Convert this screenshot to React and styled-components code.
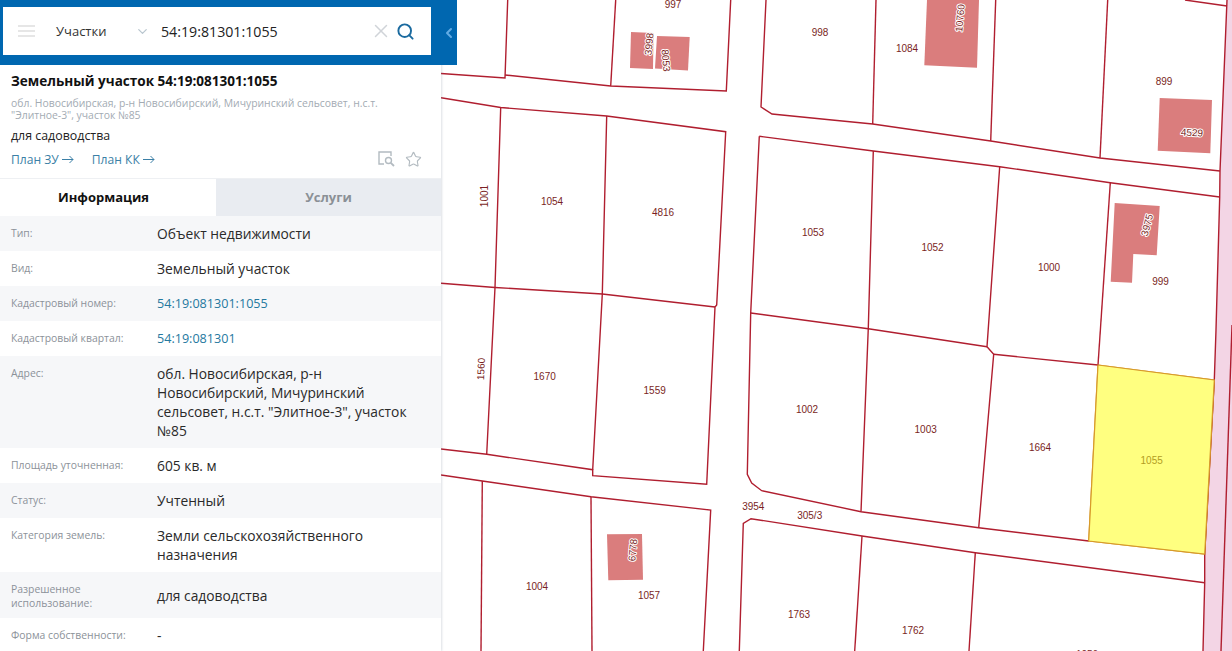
import styled, { createGlobalStyle } from "styled-components";
import { X, Search, ChevronDown, ChevronLeft, Star } from "lucide-react";

const Global = createGlobalStyle`
  html, body {
    margin: 0;
    height: 100%;
    overflow: hidden;
    background: #fff;
    font-family: "Open Sans", "Liberation Sans", sans-serif;
  }
`

const Page = styled.div`
  display: flex;
  width: 1232px;
  height: 651px;
  overflow: hidden;
`

const Sidebar = styled.aside`
  position: relative;
  z-index: 2;
  flex: 0 0 441px;
  display: flex;
  flex-direction: column;
  background: #fff;
  box-shadow: 1px 0 2px rgba(120, 130, 150, 0.25);
`

const Header = styled.header`
  position: relative;
  flex: 0 0 65px;
  box-sizing: border-box;
  padding: 7px 10px 10px 3px;
  background: #0067b0;
`

const Toggle = styled.button`
  position: absolute;
  top: 0;
  left: 100%;
  width: 16px;
  height: 65px;
  padding: 0;
  border: 0;
  display: flex;
  align-items: center;
  justify-content: center;
  background: #0067b0;
  color: #62ace4;
`

const SearchBox = styled.div`
  height: 48px;
  display: flex;
  align-items: center;
  background: #fff;
`

const Burger = styled.div`
  width: 17px;
  height: 12px;
  margin-left: 15px;
  border-top: 2px solid #e6e6e6;
  border-bottom: 2px solid #e6e6e6;
  box-sizing: border-box;
  position: relative;
  &::after {
    content: "";
    position: absolute;
    left: 0;
    right: 0;
    top: 3px;
    height: 2px;
    background: #e6e6e6;
  }
`

const Scope = styled.span`
  margin-left: 21px;
  width: 80px;
  font-size: 13px;
  color: #333;
`

const Chevron = styled(ChevronDown)`
  color: #b9c6cf;
  margin-left: -1px;
`

const Query = styled.span`
  margin-left: 11px;
  flex: 1;
  font-size: 14.2px;
  color: #222;
`

const Clear = styled(X)`
  color: #d0d4d8;
  margin-right: 4px;
`

const SearchIcon = styled(Search)`
  color: #1a6a9f;
  margin-right: 16px;
`

const Summary = styled.section`
  flex: 0 0 113px;
  box-sizing: border-box;
  padding: 7px 11px 0;
  position: relative;
`

const Title = styled.h1`
  margin: 0;
  font-size: 13.55px;
  line-height: 18px;
  font-weight: 700;
  color: #111;
`

const Address = styled.p`
  margin: 7px 0 0;
  font-size: 10.4px;
  line-height: 12px;
  color: #a3abb3;
`

const Purpose = styled.p`
  margin: 6px 0 0;
  font-size: 12.4px;
  line-height: 18px;
  color: #222;
`

const Actions = styled.div`
  display: flex;
  align-items: center;
  margin-top: 5px;
  height: 18px;
`

const PlanLink = styled.a`
  display: flex;
  align-items: center;
  gap: 3px;
  margin-right: 18px;
  font-size: 12.1px;
  color: #3b7fa6;
`

const ActionIcons = styled.div`
  margin-left: auto;
  margin-right: 8px;
  display: flex;
  align-items: center;
  gap: 9px;
  color: #b3bbc1;
`

const Tabs = styled.div`
  flex: 0 0 38px;
  display: grid;
  grid-template-columns: 216px 1fr;
  border-top: 1px solid #eef0f3;
  box-sizing: border-box;
`

const Tab = styled.div`
  display: flex;
  align-items: center;
  justify-content: center;
  padding: 0 ${p => (p.$active ? "9px" : "0")} 2px 0;
  font-size: 13px;
  font-weight: 700;
  color: ${p => (p.$active ? "#111" : "#8b9096")};
  background: ${p => (p.$active ? "#fff" : "#e9ecf1")};
`

const Rows = styled.div`
  flex: 1;
  overflow: hidden;
`

const Row = styled.div`
  display: grid;
  grid-template-columns: 157px 1fr;
  background: ${p => (p.$shaded ? "#f6f7f9" : "#fff")};
`

const Label = styled.div`
  padding: 10px 20px 8px 11px;
  font-size: 10.4px;
  line-height: 14px;
  color: #8c9299;
`

const Value = styled.div`
  padding: 8px 20px 8px 0;
  font-size: ${p => (p.$link ? "12.6px" : "13.8px")};
  line-height: 19px;
  color: ${p => (p.$link ? "#25799f" : "#2a2a2a")};
  align-self: ${p => (p.$center ? "center" : "start")};
`

const MapArea = styled.main`
  flex: 1;
  background: #fff;
`

const MapSvg = styled.svg`
  display: block;
  width: 791px;
  height: 651px;
`

const Boundary = styled.polyline`
  fill: none;
  stroke: #b01e2f;
  stroke-width: 1.4;
  stroke-linejoin: miter;
`

const Building = styled.polygon`
  fill: #da7d7d;
`

const Selected = styled.polygon`
  fill: #ffff80;
  stroke: #d79a2b;
  stroke-width: 1.2;
`

const Strip = styled.polygon`
  fill: #f3d5e5;
`

const Tag = styled.text`
  font-family: "Liberation Sans", Arial, sans-serif;
  font-size: 10px;
  text-anchor: middle;
  dominant-baseline: central;
  fill: ${p => p.$color || "#7a1f24"};
  ${p => p.$halo && "paint-order: stroke; stroke: #fff; stroke-width: 2px; stroke-linejoin: round;"}
`

const rows = [
  { label: "Тип:", value: "Объект недвижимости" },
  { label: "Вид:", value: "Земельный участок" },
  { label: "Кадастровый номер:", value: "54:19:081301:1055", link: true },
  { label: "Кадастровый квартал:", value: "54:19:081301", link: true },
  { label: "Адрес:", value: 'обл. Новосибирская, р-н Новосибирский, Мичуринский сельсовет, н.с.т. "Элитное-3", участок №85' },
  { label: "Площадь уточненная:", value: "605 кв. м" },
  { label: "Статус:", value: "Учтенный" },
  { label: "Категория земель:", value: "Земли сельскохозяйственного назначения" },
  { label: "Разрешенное использование:", value: "для садоводства", center: true },
  { label: "Форма собственности:", value: "-" },
]

const lines = [
  "441,73.5 505,78 507.7,0",
  "505,75 610.7,86 726.3,91 730.7,0",
  "610.7,86 615.7,0",
  "766,0 761,107 772,114 832,120 872.7,124 990.7,141 1100,158 1220,171",
  "872.7,124 876,0",
  "990.7,141 995.7,0",
  "1100,158 1107.7,0",
  "1185,0 1227,6",
  "1227,0 1220,171 1219.7,197 1216,330 1214.3,380 1204.7,554 1204.7,582.7 1203,651",
  "1232,325 1221,651",
  "441,97.7 500.7,107.5 606.7,116 725.7,131.7 716.7,305 715,307 706.7,484.3 592.7,475.7 592.7,469.7 486.7,454.3 441,449",
  "500.7,107.5 495,287.5 486.7,454.3",
  "606.7,116 602.3,294 592.7,469.7",
  "441,283.3 495,287.5 602.3,294 715,307",
  "441,475 482.3,481 591,496.7 710.7,510 703.3,651",
  "482.3,481 481,651",
  "591,496.7 592,651",
  "759.3,136.3 873.3,151 999.7,166.7 1110.3,182.7 1219.7,197",
  "759.3,136.3 750.7,313 747.3,474.3 751.7,483 761.7,490.7 861,511.7 978.7,527.7 1088.7,541",
  "873.3,151 868.3,328 861,511.7",
  "999.7,166.7 987,346.7 993.7,354.3 978.7,527.7",
  "1110.3,182.7 1098,365",
  "750.7,313 868.3,328.7 987,346.7",
  "993.7,354.3 1098,365",
  "739.3,651 743.3,523.3 751,518.7 862,536 975.3,552.7 1204.7,582.7",
  "862,536 854.7,651",
  "975.3,552.7 969,651",
]

const buildings = [
  "631,32 653.5,33 653,69 630,68",
  "657,36 689.7,37 688,70.5 655,68.5",
  "927,0 979,0 977,67.7 924.3,65.3",
  "1159.7,98 1212,100 1210.3,153.3 1157.7,150.7",
  "1114.7,203 1159.7,206 1156.7,255.3 1133.3,254 1132,282.7 1110.7,281.7",
  "607,534.3 642,534 643,579.7 608.3,580.3",
]

const tags = [
  { t: "997", x: 673, y: 4 },
  { t: "3998", x: 649, y: 44, r: -85, halo: true },
  { t: "8053", x: 666, y: 60.5, r: 85, halo: true },
  { t: "998", x: 820, y: 32 },
  { t: "1001", x: 484, y: 196, r: -90 },
  { t: "1054", x: 552, y: 201 },
  { t: "4816", x: 663, y: 212 },
  { t: "1053", x: 813, y: 232 },
  { t: "10760", x: 960, y: 18, r: -85, halo: true },
  { t: "1084", x: 907, y: 48, halo: true },
  { t: "899", x: 1164, y: 81 },
  { t: "4529", x: 1192, y: 132.5, r: 3, halo: true },
  { t: "1052", x: 932.5, y: 247 },
  { t: "1000", x: 1049, y: 267 },
  { t: "3975", x: 1147, y: 225, r: -75, halo: true },
  { t: "999", x: 1160.5, y: 281 },
  { t: "1560", x: 481, y: 369, r: -88 },
  { t: "1670", x: 544.7, y: 376 },
  { t: "1559", x: 654.7, y: 390 },
  { t: "1002", x: 807, y: 409 },
  { t: "1003", x: 925.7, y: 429 },
  { t: "1664", x: 1040, y: 447 },
  { t: "1055", x: 1151.7, y: 460, color: "#b39d23" },
  { t: "3954", x: 753.3, y: 506.5 },
  { t: "305/3", x: 809.7, y: 515 },
  { t: "1004", x: 537, y: 586 },
  { t: "6778", x: 632.7, y: 550, r: -85, halo: true },
  { t: "1057", x: 649, y: 595 },
  { t: "1763", x: 799, y: 614 },
  { t: "1762", x: 913, y: 630 },
  { t: "1056", x: 1087, y: 654 },
]

function ThinArrow() {
  return (
    <svg width="12" height="9" viewBox="0 0 12 9" fill="none" stroke="currentColor" strokeWidth="1">
      <path d="M0 4.5h11M7.5 1l3.5 3.5L7.5 8" />
    </svg>
  )
}

function PlanSearchIcon() {
  return (
    <svg width="18" height="16" viewBox="0 0 18 16" fill="none" stroke="currentColor" strokeWidth="1.4">
      <path d="M6 13H1V1h12v4" />
      <circle cx="10.5" cy="9.5" r="3" />
      <path d="M12.8 11.8 16 15" strokeWidth="1.8" />
    </svg>
  )
}

export default function App() {
  return (
    <Page>
      <Global />
      <Sidebar>
        <Header>
          <SearchBox>
            <Burger />
            <Scope>Участки</Scope>
            <Chevron size={15} strokeWidth={2} />
            <Query>54:19:81301:1055</Query>
            <Clear size={22} strokeWidth={1.6} />
            <SearchIcon size={19} strokeWidth={2.4} />
          </SearchBox>
          <Toggle aria-label="Свернуть">
            <ChevronLeft size={20} strokeWidth={3} />
          </Toggle>
        </Header>
        <Summary>
          <Title>Земельный участок 54:19:081301:1055</Title>
          <Address>
            обл. Новосибирская, р-н Новосибирский, Мичуринский сельсовет, н.с.т.
            <br />
            "Элитное-3", участок №85
          </Address>
          <Purpose>для садоводства</Purpose>
          <Actions>
            <PlanLink>План ЗУ <ThinArrow /></PlanLink>
            <PlanLink>План КК <ThinArrow /></PlanLink>
            <ActionIcons>
              <PlanSearchIcon />
              <Star size={17} strokeWidth={1.6} />
            </ActionIcons>
          </Actions>
        </Summary>
        <Tabs>
          <Tab $active>Информация</Tab>
          <Tab>Услуги</Tab>
        </Tabs>
        <Rows>
          {rows.map((r, i) => (
            <Row key={r.label} $shaded={i % 2 === 0}>
              <Label>{r.label}</Label>
              <Value $link={r.link} $center={r.center}>{r.value}</Value>
            </Row>
          ))}
        </Rows>
      </Sidebar>
      <MapArea>
        <MapSvg viewBox="441 0 791 651">
          <Strip points="1227,0 1232,0 1232,651 1203,651 1204.7,554 1214.3,380 1216,330 1219.7,197 1220,171" />
          {buildings.map(b => <Building key={b} points={b} />)}
          <Selected points="1098,365 1214.3,380 1204.7,554 1088.7,541" />
          {lines.map(l => <Boundary key={l} points={l} />)}
          <Selected points="1098,365 1214.3,380 1204.7,554 1088.7,541" />
          {tags.map(l => (
            <Tag
              key={l.t}
              x={l.x}
              y={l.y}
              $color={l.color}
              $halo={l.halo}
              transform={l.r ? `rotate(${l.r} ${l.x} ${l.y})` : undefined}
            >
              {l.t}
            </Tag>
          ))}
        </MapSvg>
      </MapArea>
    </Page>
  )
}
